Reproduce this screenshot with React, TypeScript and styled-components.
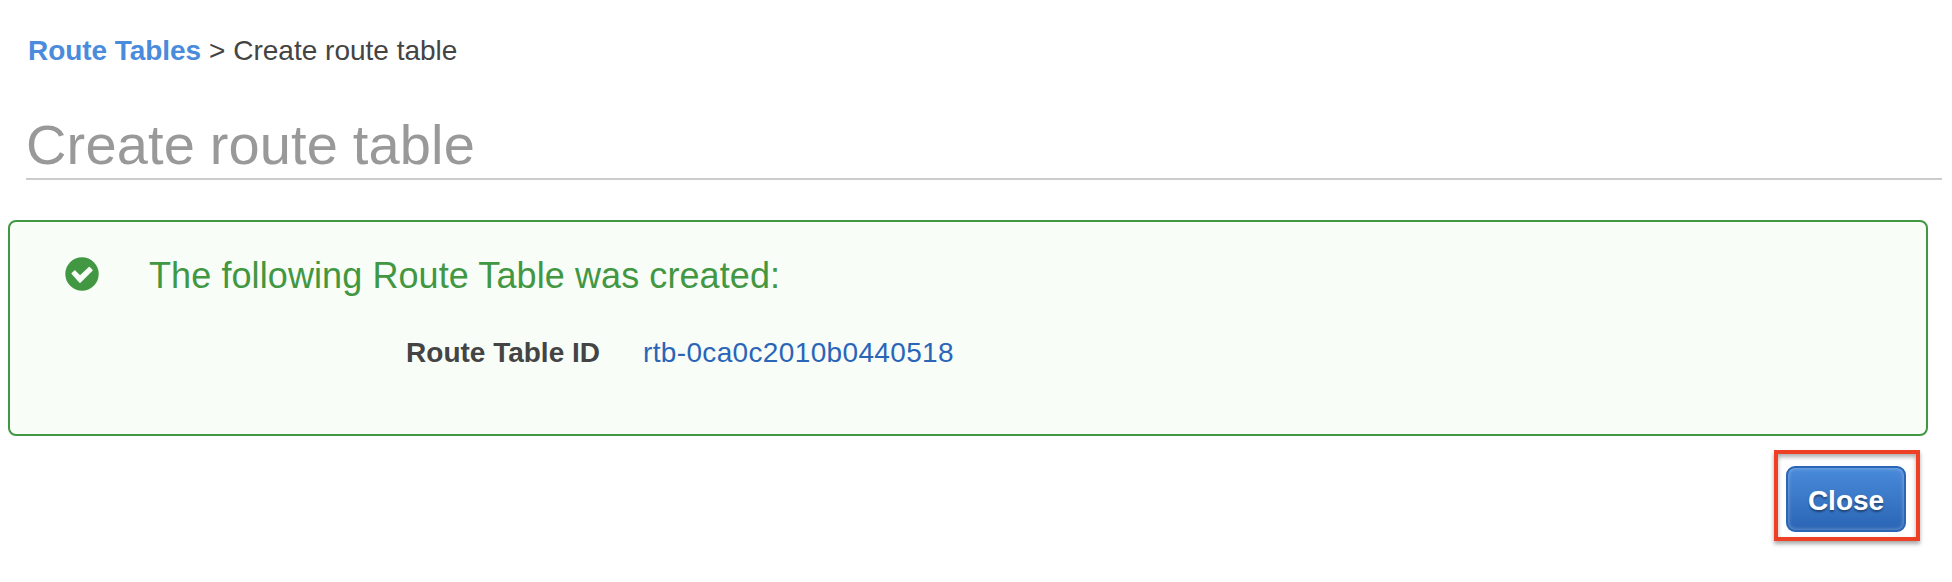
import React from 'react';
import styled, { createGlobalStyle } from 'styled-components';

const GlobalStyle = createGlobalStyle`
  *, *::before, *::after { box-sizing: border-box; }
  body {
    margin: 0;
    background: #fff;
    color: #444;
    font-family: "Liberation Sans", Arial, sans-serif;
    font-size: 28px;
    line-height: 41px;
  }
`;

const Page = styled.main`
  display: flex;
  flex-direction: column;
  height: 582px;
  padding: 30px 10px 0 8px;
`;

const Breadcrumb = styled.nav`
  display: flex;
  gap: 8px;
  height: 40px;
  padding-left: 20px;
  white-space: nowrap;
`;

const CrumbLink = styled.a`
  color: #4a8bdc;
  font-weight: 700;
  letter-spacing: -0.07px;
  text-decoration: none;
`;

const Title = styled.h1`
  height: 67px;
  margin: 43px 0 0 18px;
  border-bottom: 2px solid #ccc;
  color: #999;
  font-size: 56px;
  font-weight: 400;
  letter-spacing: 0.15px;
  word-spacing: -1px;
  line-height: 64px;
`;

const Alert = styled.section`
  display: flex;
  align-items: flex-start;
  height: 216px;
  margin: 40px 14px 0 0;
  padding: 32px 55px;
  border: 2px solid #429742;
  border-radius: 8px;
  background: #f8fdf8;
`;

const StatusIcon = styled.svg`
  flex: none;
  width: 34px;
  height: 34px;
  margin: 3px 50px 0 0;
`;

const AlertHeading = styled.h2`
  margin: 0 0 34px;
  color: #429742;
  font-size: 36px;
  font-weight: 400;
  letter-spacing: 0.09px;
  line-height: 44px;
  white-space: nowrap;
`;

const Details = styled.dl`
  display: grid;
  grid-template-columns: 451px auto;
  column-gap: 43px;
  margin: 0;
`;

const Term = styled.dt`
  font-weight: 700;
  text-align: right;
`;

const Value = styled.dd`
  margin: 0;
`;

const ResourceLink = styled.a`
  color: #2b65b8;
  letter-spacing: 0.35px;
  text-decoration: none;
`;

const Actions = styled.footer`
  display: flex;
  justify-content: flex-end;
  padding: 14px 22px 0 0;
`;

const Highlight = styled.div`
  display: flex;
  width: 146px;
  height: 91px;
  padding: 12px 8px 9px;
  border: 4px solid #ee4025;
  box-shadow: 0 3px 4px rgba(0, 0, 0, 0.34), inset 0 3px 4px rgba(0, 0, 0, 0.32);
`;

const Button = styled.button`
  width: 120px;
  height: 66px;
  padding: 3px 0 0;
  border: 2px solid #2b65b5;
  border-radius: 9px;
  background: linear-gradient(#4a8ada, #2b65b5);
  box-shadow: inset 0 0 4px rgba(255, 255, 255, 0.4);
  color: #fff;
  font: 700 28px/41px "Liberation Sans", Arial, sans-serif;
  text-shadow: 0 2px 2px rgba(0, 0, 0, 0.4);
`;

export default function App() {
  return (
    <>
      <GlobalStyle />
      <Page>
        <Breadcrumb>
          <CrumbLink>Route Tables</CrumbLink>
          <span>&gt;</span>
          <span>Create route table</span>
        </Breadcrumb>
        <Title>Create route table</Title>
        <Alert>
          <StatusIcon viewBox="0 0 34 34" aria-hidden="true">
            <circle cx="17" cy="17" r="16.7" fill="#429742" />
            <path
              d="M7.2 16.6 L9.8 14 L15 19.2 L24.3 10.6 L27 13.3 L15 25.2 Z"
              fill="#f8fdf8"
              stroke="#f8fdf8"
              strokeWidth="1.5"
              strokeLinejoin="round"
            />
          </StatusIcon>
          <div>
            <AlertHeading>The following Route Table was created:</AlertHeading>
            <Details>
              <Term>Route Table ID</Term>
              <Value>
                <ResourceLink>rtb-0ca0c2010b0440518</ResourceLink>
              </Value>
            </Details>
          </div>
        </Alert>
        <Actions>
          <Highlight>
            <Button type="button">Close</Button>
          </Highlight>
        </Actions>
      </Page>
    </>
  );
}
